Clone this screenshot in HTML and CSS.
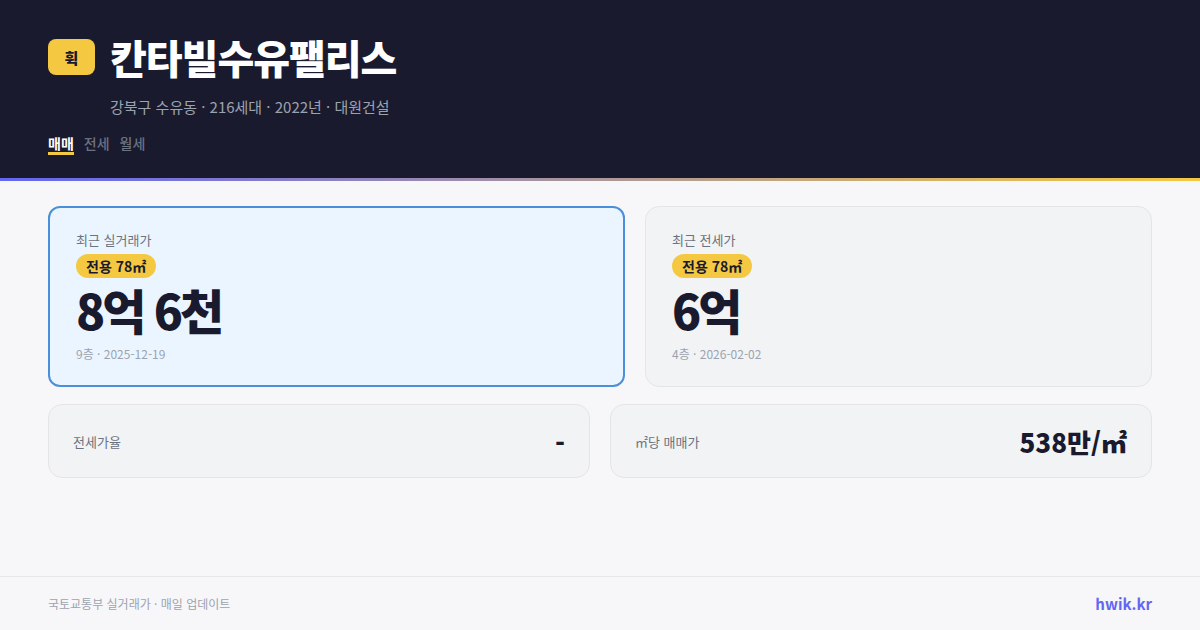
FILE: index.html
```html
<!DOCTYPE html>
<html lang="ko">
<head>
<meta charset="utf-8">
<link rel="stylesheet" href="styles.css">
</head>
<body>
<div class="page">
  <header class="header">
    <div class="title-row">
      <div class="logo">휙</div>
      <h1 class="title">칸타빌수유팰리스</h1>
    </div>
    <div class="subtitle">강북구 수유동 · 216세대 · 2022년 · 대원건설</div>
    <nav class="tabs">
      <span class="tab active">매매</span>
      <span class="tab">전세</span>
      <span class="tab">월세</span>
    </nav>
  </header>
  <div class="accent"></div>
  <main class="main">
    <div class="row top">
      <section class="card card-primary">
        <div class="label">최근 실거래가</div>
        <span class="pill">전용 78㎡</span>
        <div class="price">8억 6천</div>
        <div class="meta">9층 · 2025-12-19</div>
      </section>
      <section class="card">
        <div class="label">최근 전세가</div>
        <span class="pill">전용 78㎡</span>
        <div class="price">6억</div>
        <div class="meta">4층 · 2026-02-02</div>
      </section>
    </div>
    <div class="row bottom">
      <section class="card stat">
        <span class="stat-label">전세가율</span>
        <span class="stat-value">-</span>
      </section>
      <section class="card stat">
        <span class="stat-label">㎡당 매매가</span>
        <span class="stat-value">538만/㎡</span>
      </section>
    </div>
  </main>
  <footer class="footer">
    <span class="source">국토교통부 실거래가 · 매일 업데이트</span>
    <span class="brand">hwik.kr</span>
  </footer>
</div>
</body>
</html>
```
FILE: styles.css
```css
* { box-sizing: border-box; margin: 0; padding: 0; }
html, body { width: 1200px; height: 630px; overflow: hidden; }
body {
  font-family: "Noto Sans CJK KR", "Noto Sans", sans-serif;
  background: #f7f7f9;
  color: #1a1a2e;
}
.page { display: flex; flex-direction: column; height: 630px; }

.header {
  background: #1a1a2e;
  height: 178px;
  padding: 32px 48px 0;
}
.title-row { display: flex; align-items: center; gap: 15px; height: 50px; }
.logo {
  width: 47px; height: 36px;
  background: #f5c842;
  border-radius: 8px;
  display: flex; align-items: center; justify-content: center;
  font-size: 15px; font-weight: 900; color: #1a1a2e;
}
.title {
  font-size: 40px; font-weight: 900; color: #fff;
  letter-spacing: -1px; line-height: 50px;
}
.subtitle {
  margin: 15px 0 0 62px;
  font-size: 15px; line-height: 20px; color: #9ca3af;
}
.tabs { display: flex; gap: 10px; margin-top: 17px; }
.tab {
  font-size: 14px; line-height: 18px; font-weight: 500; color: #6b7280;
  border-bottom: 3px solid transparent;
}
.tab.active { color: #fff; font-weight: 700; border-bottom-color: #f5c842; }

.accent { height: 3px; background: linear-gradient(90deg, #6366f1, #f5c842); }

.main { flex: 1; padding: 25px 48px 0; display: flex; flex-direction: column; gap: 19px; }
.row { display: grid; gap: 20px; }
.row.top { grid-template-columns: 577fr 507fr; height: 179px; }
.row.bottom { grid-template-columns: 1fr 1fr; height: 74px; }

.card {
  background: #f2f3f5;
  border: 1px solid #e3e5e9;
  border-radius: 14px;
  padding: 24px 26px;
}
.card-primary {
  background: #ebf5ff;
  border: 2px solid #4a8fd9;
  border-radius: 12px;
  padding: 23px 26px;
}
.label { font-size: 13px; line-height: 18px; color: #6b7280; }
.pill {
  display: inline-block;
  margin-top: 5px;
  background: #f5c842;
  border-radius: 12px;
  padding: 0 10px;
  height: 24px; line-height: 24px;
  font-size: 14px; font-weight: 700; color: #1a1a2e;
}
.price {
  font-size: 48px; font-weight: 900; line-height: 62px;
  letter-spacing: -3px; color: #1a1a2e;
}
.meta { margin-top: 6px; font-size: 12px; line-height: 16px; color: #9ca3af; }

.stat { display: flex; align-items: center; justify-content: space-between; padding: 0 24px; }
.stat-label { font-size: 13px; color: #6b7280; }
.stat-value { font-size: 26px; font-weight: 900; color: #1a1a2e; }

.footer {
  height: 54px;
  border-top: 1px solid #e5e7eb;
  padding: 0 48px;
  display: flex; align-items: center; justify-content: space-between;
  background: #f7f7f9;
}
.source { font-size: 12px; color: #9ca3af; }
.brand { font-size: 15px; font-weight: 700; color: #6366f1; }
```
